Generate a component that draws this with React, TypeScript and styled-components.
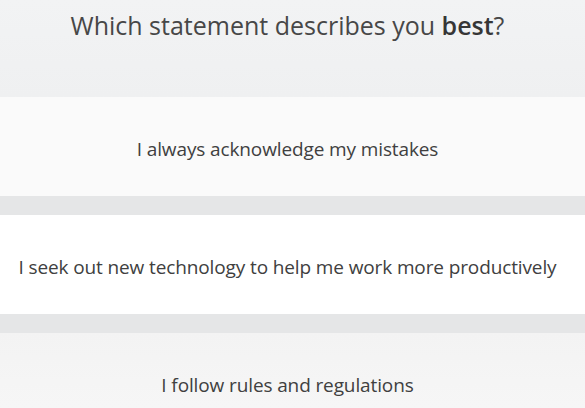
import React from "react";
import styled, { createGlobalStyle } from "styled-components";

const Global = createGlobalStyle`
  html, body { margin: 0; padding: 0; }
  body { background: #e6e7e8; font-family: "Open Sans", "Noto Sans", sans-serif; }
`;

const Page = styled.div`
  width: 585px;
  height: 408px;
  overflow: hidden;
  display: flex;
  flex-direction: column;
  background: #e5e6e7;
`;

const Header = styled.div`
  flex-shrink: 0;
  height: 97px;
  background: linear-gradient(#f2f3f4, #eff0f1);
  display: flex;
  justify-content: center;
  padding-top: 7px;
  padding-right: 10px;
  box-sizing: border-box;
`;

const Title = styled.h1`
  margin: 0;
  font-size: 25px;
  font-weight: 400;
  color: #474747;
  line-height: 36px;
  b { font-weight: 600; color: #363636; }
`;

const Options = styled.div`
  flex-shrink: 0;
  display: flex;
  flex-direction: column;
  gap: 19px;
`;

const Option = styled.div<{ $tone: string }>`
  height: 99px;
  padding-top: 4px;
  padding-right: 10px;
  box-sizing: border-box;
  background: ${(p) => p.$tone};
  display: flex;
  align-items: center;
  justify-content: center;
  font-size: 19px;
  letter-spacing: -0.12px;
  color: #404040;
`;

const options = [
  { text: "I always acknowledge my mistakes", tone: "#fafafa" },
  { text: "I seek out new technology to help me work more productively", tone: "#ffffff" },
  { text: "I follow rules and regulations", tone: "linear-gradient(#f3f3f3, #f7f7f7)" },
];

export default function App() {
  return (
    <Page>
      <Global />
      <Header>
        <Title>
          Which statement describes you <b>best</b>?
        </Title>
      </Header>
      <Options>
        {options.map((o) => (
          <Option key={o.text} $tone={o.tone}>
            {o.text}
          </Option>
        ))}
      </Options>
    </Page>
  );
}
